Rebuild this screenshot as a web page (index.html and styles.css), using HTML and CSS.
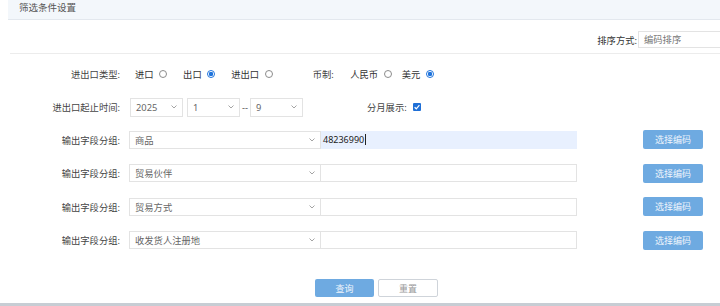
FILE: index.html
```html
<!DOCTYPE html>
<html lang="zh-CN">
<head>
<meta charset="utf-8">
<title>筛选条件设置</title>
<link rel="stylesheet" href="styles.css">
</head>
<body>
<div class="page">
  <div class="panel-head">筛选条件设置</div>

  <div class="sort-bar">
    <span class="sort-label">排序方式:</span>
    <div class="sort-input">编码排序</div>
  </div>

  <div class="form">
    <div class="row row-type">
      <span class="lbl">进出口类型:</span>
      <div class="opts">
        <span class="opt">进口<i class="radio"></i></span>
        <span class="opt">出口<i class="radio on"></i></span>
        <span class="opt">进出口<i class="radio"></i></span>
      </div>
      <div class="currency">
        <span class="cur-lbl">币制:</span>
        <span class="opt opt-tight">人民币<i class="radio"></i></span>
        <span class="opt">美元<i class="radio on"></i></span>
      </div>
    </div>

    <div class="row row-time">
      <span class="lbl">进出口起止时间:</span>
      <div class="sel sel-sm sel-first">2025<svg class="chev" viewBox="0 0 6 4"><polyline points="0.5,0.5 3,3 5.5,0.5"/></svg></div>
      <div class="sel sel-sm">1<svg class="chev" viewBox="0 0 6 4"><polyline points="0.5,0.5 3,3 5.5,0.5"/></svg></div>
      <span class="dash">--</span>
      <div class="sel sel-sm">9<svg class="chev" viewBox="0 0 6 4"><polyline points="0.5,0.5 3,3 5.5,0.5"/></svg></div>
      <span class="month-lbl">分月展示:</span>
      <span class="check"><svg viewBox="0 0 8 8"><polyline points="1.6,4.2 3.3,5.8 6.4,2.2"/></svg></span>
    </div>

    <div class="row field-row">
      <span class="lbl">输出字段分组:</span>
      <div class="sel sel-wide">商品<svg class="chev" viewBox="0 0 6 4"><polyline points="0.5,0.5 3,3 5.5,0.5"/></svg></div>
      <div class="txt txt-filled">48236990<span class="caret"></span></div>
      <button class="btn-pick" type="button">选择编码</button>
    </div>

    <div class="row field-row">
      <span class="lbl">输出字段分组:</span>
      <div class="sel sel-wide">贸易伙伴<svg class="chev" viewBox="0 0 6 4"><polyline points="0.5,0.5 3,3 5.5,0.5"/></svg></div>
      <div class="txt"></div>
      <button class="btn-pick" type="button">选择编码</button>
    </div>

    <div class="row field-row">
      <span class="lbl">输出字段分组:</span>
      <div class="sel sel-wide">贸易方式<svg class="chev" viewBox="0 0 6 4"><polyline points="0.5,0.5 3,3 5.5,0.5"/></svg></div>
      <div class="txt"></div>
      <button class="btn-pick" type="button">选择编码</button>
    </div>

    <div class="row field-row">
      <span class="lbl">输出字段分组:</span>
      <div class="sel sel-wide">收发货人注册地<svg class="chev" viewBox="0 0 6 4"><polyline points="0.5,0.5 3,3 5.5,0.5"/></svg></div>
      <div class="txt"></div>
      <button class="btn-pick" type="button">选择编码</button>
    </div>
  </div>

  <div class="actions">
    <button class="btn-query" type="button">查询</button>
    <button class="btn-reset" type="button">重置</button>
  </div>

  <div class="bottom-rule"></div>
</div>
</body>
</html>
```

FILE: styles.css
```css
html, body {
  margin: 0;
  padding: 0;
}

body {
  width: 720px;
  height: 306px;
  overflow: hidden;
  background: #ffffff;
  font-family: "Noto Sans", "Noto Sans CJK SC", sans-serif;
  font-size: 9.3px;
  color: #444;
}

.page {
  width: 720px;
  height: 306px;
  overflow: hidden;
}

.panel-head {
  margin-left: 8px;
  height: 20px;
  box-sizing: border-box;
  padding-left: 11px;
  line-height: 15px;
  font-size: 9.5px;
  color: #555;
  background: #f3f7fb;
  border-bottom: 1px solid #e3e8ee;
}

.sort-bar {
  margin-left: 10px;
  height: 34px;
  box-sizing: border-box;
  padding-top: 6px;
  border-bottom: 1px solid #ececec;
  display: flex;
  justify-content: flex-end;
  align-items: center;
}

.sort-label {
  color: #333;
}

.sort-input {
  width: 92px;
  height: 17px;
  box-sizing: border-box;
  margin-left: 1px;
  margin-right: -10px;
  padding-left: 5px;
  border: 1px solid #e3e3e3;
  line-height: 15px;
  color: #777;
}

.form {
  padding-top: 10px;
}

.row {
  display: flex;
  align-items: center;
}

.lbl {
  width: 120px;
  flex: none;
  text-align: right;
  color: #444;
}

.row-type {
  height: 20px;
}

.opts {
  display: flex;
  align-items: center;
  margin-left: 15px;
}

.opt {
  display: inline-flex;
  align-items: center;
  gap: 5.5px;
  margin-right: 16px;
  color: #333;
}

.opts .opt:last-child {
  margin-right: 0;
}

.radio {
  display: inline-block;
  width: 8px;
  height: 8px;
  box-sizing: border-box;
  border: 1px solid #8c8c8c;
  border-radius: 50%;
  background: #fff;
}

.radio.on {
  border-color: #1f74dc;
  background: radial-gradient(circle, #1f74dc 0 2px, #ffffff 2.4px);
}

.currency {
  display: flex;
  align-items: center;
  margin-left: 40px;
}

.cur-lbl {
  margin-right: 16.5px;
  color: #444;
}

.opt-tight {
  margin-right: 10px;
}

.row-time {
  height: 20px;
  margin-top: 13px;
}

.sel {
  position: relative;
  display: flex;
  align-items: center;
  box-sizing: border-box;
  border: 1px solid #e3e3e3;
  padding-left: 5px;
  color: #666;
  background: #fff;
}

.chev {
  position: absolute;
  right: 5px;
  top: 50%;
  width: 6px;
  height: 4px;
  margin-top: -2px;
  fill: none;
  stroke: #9a9a9a;
  stroke-width: 0.9;
}

.sel-sm {
  width: 53px;
  height: 19px;
  margin-left: 4px;
}

.sel-first {
  margin-left: 10px;
}

.dash {
  width: 10px;
  text-align: center;
  color: #555;
}

.row-time .dash + .sel-sm {
  margin-left: 0;
}

.month-lbl {
  margin-left: 64px;
  color: #444;
}

.check {
  display: inline-flex;
  width: 8px;
  height: 8px;
  margin-left: 6px;
  border-radius: 1px;
  background: #1f6fd6;
}

.check svg {
  width: 8px;
  height: 8px;
  fill: none;
  stroke: #ffffff;
  stroke-width: 1.2;
}

.field-row {
  height: 19px;
  margin-top: 14.5px;
}

.row-time + .field-row {
  margin-top: 13px;
}

.sel-wide {
  width: 192px;
  height: 18px;
  margin-left: 9px;
}

.txt {
  width: 256px;
  height: 18px;
  box-sizing: border-box;
  border: 1px solid #e3e3e3;
  border-left: none;
  padding-left: 2px;
  display: flex;
  align-items: center;
  color: #222;
  font-size: 9px;
}

.txt-filled {
  background: #e8f0fe;
  border-color: #e8f0fe;
}

.caret {
  display: inline-block;
  width: 1px;
  height: 11px;
  margin-left: 1px;
  background: #222;
}

.btn-pick {
  width: 60px;
  height: 19px;
  margin-left: 66px;
  padding: 0;
  border: none;
  border-radius: 2px;
  background: #6eaae1;
  color: #eef5fc;
  font-family: inherit;
  font-size: 9px;
}

.actions {
  display: flex;
  margin-top: 29.5px;
  padding-left: 315px;
  gap: 4px;
}

.btn-query,
.btn-reset {
  height: 18px;
  padding: 0;
  border-radius: 2px;
  font-family: inherit;
  font-size: 9px;
}

.btn-query {
  width: 59px;
  border: none;
  background: #6eaae1;
  color: #eef5fc;
}

.btn-reset {
  width: 60px;
  border: 1px solid #cfd4da;
  background: #fff;
  color: #999;
}

.bottom-rule {
  margin-top: 6px;
  height: 3px;
  background: #c7cdd4;
}
```
